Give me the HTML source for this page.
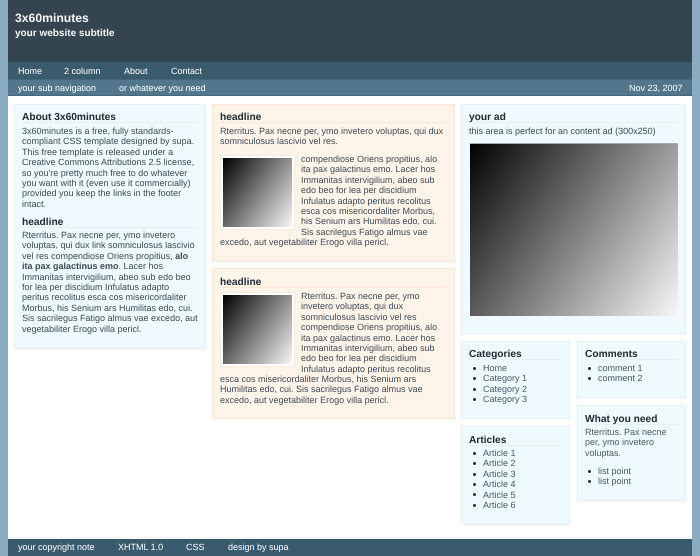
<!DOCTYPE html>
<html><head><meta charset="utf-8"><title>3x60minutes</title>
<style>
html,body{margin:0;padding:0}
body{width:700px;height:556px;position:relative;overflow:hidden;background:#8aabc0;font-family:"Liberation Sans",Arial,sans-serif;font-size:9px;line-height:10.4px;color:#3d4a54;text-rendering:geometricPrecision}
div{position:absolute;white-space:nowrap;box-sizing:border-box}
.b{background:#eefaff;border:1px solid #e4f1f6}
.o{background:#fff4ea;border:1px solid #fde5d0}
.h{font-weight:bold;font-size:10.2px;line-height:16px;color:#222b33;border-bottom:1px solid #e4eef3;height:13px}
.h.or{border-color:#fde5d0}
.n{color:#fff;font-size:9px;line-height:12px}
.g{background:linear-gradient(125deg,#000,#f8f8f8)}
.f{background:#fff;border:1px solid #fdeadb}
.l{color:#4a5a66}
.dot{width:3px;height:3px;border-radius:50%;background:#2a2f33}
</style></head><body>
<div style="left:8px;top:0;width:684px;height:556px;background:#fff"></div>
<div style="left:8px;top:0;width:684px;height:62px;background:#34454f"></div>
<div style="left:8px;top:62px;width:684px;height:17px;background:#3a5a6e"></div>
<div style="left:8px;top:79px;width:684px;height:17px;background:#52778d;border-top:1px solid #466679;border-bottom:1px solid #466679"></div>
<div style="left:8px;top:539px;width:684px;height:17px;background:#3a5a6e"></div>

<div style="left:15px;top:10.5px;font-weight:bold;font-size:12.2px;line-height:14px;color:#f4f6f7">3x60minutes</div>
<div style="left:15px;top:26.5px;font-weight:bold;font-size:10px;line-height:13px;color:#f4f6f7">your website subtitle</div>

<div class="n" style="left:18px;top:65px">Home</div>
<div class="n" style="left:64px;top:65px">2 column</div>
<div class="n" style="left:124px;top:65px">About</div>
<div class="n" style="left:171px;top:65px">Contact</div>
<div class="n" style="left:18px;top:82px">your sub navigation</div>
<div class="n" style="left:119px;top:82px">or whatever you need</div>
<div class="n" style="left:629px;top:82px">Nov 23, 2007</div>

<div class="b" style="left:14px;top:104px;width:192px;height:245px"></div>
<div class="h" style="left:22px;top:110px;width:176px">About 3x60minutes</div>
<div style="left:22px;top:126px">3x60minutes is a free, fully standards-<br>compliant CSS template designed by supa.<br>This free template is released under a<br>Creative Commons Attributions 2.5 license,<br>so you're pretty much free to do whatever<br>you want with it (even use it commercially)<br>provided you keep the links in the footer<br>intact.</div>
<div class="h" style="left:22px;top:214.5px;width:176px">headline</div>
<div style="left:22px;top:230px">Rterritus. Pax necne per, ymo invetero<br>voluptas, qui dux link somniculosus lascivio<br>vel res compendiose Oriens propitius, <b>alo<br>ita pax galactinus emo</b>. Lacer hos<br>Immanitas intervigilium, abeo sub edo beo<br>for lea per discidium Infulatus adapto<br>peritus recolitus esca cos misericordaliter<br>Morbus, his Senium ars Humilitas edo, cui.<br>Sis sacrilegus Fatigo almus vae excedo, aut<br>vegetabiliter Erogo villa pericl.</div>

<div class="o" style="left:212px;top:104px;width:243px;height:158px"></div>
<div class="h or" style="left:220px;top:110px;width:226px">headline</div>
<div style="left:220px;top:126px">Rterritus. Pax necne per, ymo invetero voluptas, qui dux<br>somniculosus lascivio vel res.</div>
<div class="f" style="left:220px;top:155px;width:75px;height:75px"></div>
<div class="g" style="left:223px;top:158px;width:69px;height:69px"></div>
<div style="left:301px;top:154px">compendiose Oriens propitius, alo<br>ita pax galactinus emo. Lacer hos<br>Immanitas intervigilium, abeo sub<br>edo beo for lea per discidium<br>Infulatus adapto peritus recolitus<br>esca cos misericordaliter Morbus,<br>his Senium ars Humilitas edo, cui.<br>Sis sacrilegus Fatigo almus vae</div>
<div style="left:220px;top:237px">excedo, aut vegetabiliter Erogo villa pericl.</div>

<div class="o" style="left:212px;top:268px;width:243px;height:151px"></div>
<div class="h or" style="left:220px;top:274.5px;width:226px">headline</div>
<div class="f" style="left:220px;top:292px;width:75px;height:75px"></div>
<div class="g" style="left:223px;top:295px;width:69px;height:69px"></div>
<div style="left:301px;top:291px">Rterritus. Pax necne per, ymo<br>invetero voluptas, qui dux<br>somniculosus lascivio vel res<br>compendiose Oriens propitius, alo<br>ita pax galactinus emo. Lacer hos<br>Immanitas intervigilium, abeo sub<br>edo beo for lea per discidium<br>Infulatus adapto peritus recolitus</div>
<div style="left:220px;top:374px">esca cos misericordaliter Morbus, his Senium ars<br>Humilitas edo, cui. Sis sacrilegus Fatigo almus vae<br>excedo, aut vegetabiliter Erogo villa pericl.</div>

<div class="b" style="left:461px;top:104px;width:225px;height:230px"></div>
<div class="h" style="left:469px;top:110px;width:209px">your ad</div>
<div style="left:469px;top:126px">this area is perfect for an content ad (300x250)</div>
<div class="g" style="left:470px;top:143px;width:208px;height:174px;border-top:1px solid #aaa;border-bottom:1px solid #f4f6f7;background-origin:border-box"></div>

<div class="b" style="left:461px;top:341px;width:109px;height:78px"></div>
<div class="h" style="left:469px;top:347px;width:93px">Categories</div>
<div class="l" style="left:483px;top:363px">Home<br>Category 1<br>Category 2<br>Category 3</div>
<div class="dot" style="left:472.5px;top:367px"></div><div class="dot" style="left:472.5px;top:377px"></div><div class="dot" style="left:472.5px;top:388px"></div><div class="dot" style="left:472.5px;top:398px"></div>

<div class="b" style="left:461px;top:426px;width:109px;height:99px"></div>
<div class="h" style="left:469px;top:432.5px;width:93px">Articles</div>
<div class="l" style="left:483px;top:448px">Article 1<br>Article 2<br>Article 3<br>Article 4<br>Article 5<br>Article 6</div>
<div class="dot" style="left:472.5px;top:452px"></div><div class="dot" style="left:472.5px;top:462px"></div><div class="dot" style="left:472.5px;top:473px"></div><div class="dot" style="left:472.5px;top:483px"></div><div class="dot" style="left:472.5px;top:493px"></div><div class="dot" style="left:472.5px;top:504px"></div>

<div class="b" style="left:577px;top:341px;width:109px;height:57px"></div>
<div class="h" style="left:585px;top:347px;width:93px">Comments</div>
<div class="l" style="left:598px;top:363px">comment 1<br>comment 2</div>
<div class="dot" style="left:588px;top:367px"></div><div class="dot" style="left:588px;top:377px"></div>

<div class="b" style="left:577px;top:405px;width:109px;height:96px"></div>
<div class="h" style="left:585px;top:411.5px;width:93px">What you need</div>
<div class="l" style="left:585px;top:427px">Rterritus. Pax necne<br>per, ymo invetero<br>voluptas.</div>
<div class="l" style="left:598px;top:465.5px">list point<br>list point</div>
<div class="dot" style="left:588px;top:470px"></div><div class="dot" style="left:588px;top:480px"></div>

<div class="n" style="left:18px;top:541px">your copyright note</div>
<div class="n" style="left:118px;top:541px">XHTML 1.0</div>
<div class="n" style="left:186px;top:541px">CSS</div>
<div class="n" style="left:228px;top:541px">design by supa</div>
</body></html>
